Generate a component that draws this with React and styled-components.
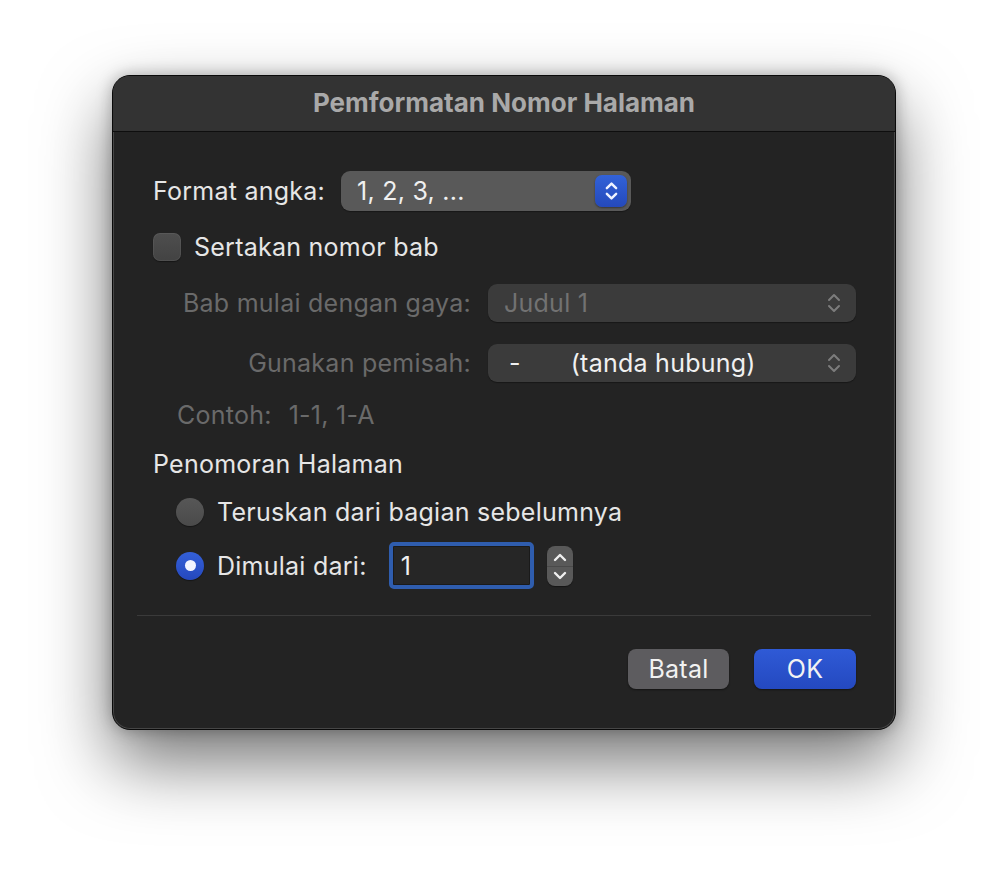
import React from "react";
import styled, { createGlobalStyle } from "styled-components";

const Global = createGlobalStyle`
  html, body { margin: 0; padding: 0; background: #ffffff; }
  body { font-family: Inter, "Noto Sans", "Liberation Sans", sans-serif; }
  * { box-sizing: border-box; }
`;

const Page = styled.div`
  width: 1008px;
  height: 878px;
  display: flex;
  align-items: flex-start;
  justify-content: flex-start;
  padding: 75px 0 0 112px;
  background: #ffffff;
`;

const Dialog = styled.div`
  width: 784px;
  height: 655px;
  border-radius: 18px;
  overflow: hidden;
  background: #232323;
  border: 1px solid #0a0a0a;
  box-shadow: inset 0 0 0 1px rgba(255, 255, 255, 0.16),
    0 32px 70px rgba(0, 0, 0, 0.55), 0 0 16px rgba(0, 0, 0, 0.28);
  display: flex;
  flex-direction: column;
  color: #e4e4e4;
  font-size: 25px;
  letter-spacing: 0.25px;
`;

const TitleBar = styled.div`
  height: 56px;
  flex: none;
  display: flex;
  align-items: center;
  justify-content: center;
  background: #333333;
  border-bottom: 1px solid #0e0e0e;
  color: #a9a9a9;
  font-weight: 700;
  font-size: 26px;
  letter-spacing: 0;
  padding-bottom: 2px;
`;

const Body = styled.div`
  padding: 39px 39px 0 40px;
  display: flex;
  flex-direction: column;
`;

const Row = styled.div`
  display: flex;
  align-items: center;
  height: ${(p) => p.$h || 28}px;
  margin-top: ${(p) => p.$mt || 0}px;
  padding-left: ${(p) => p.$indent || 0}px;
  gap: ${(p) => p.$gap || 0}px;
`;

const Label = styled.span`
  color: ${(p) => (p.$disabled ? "#6a6a6a" : "#e6e6e6")};
  white-space: nowrap;
`;

const Popup = styled.div`
  height: ${(p) => p.$h || 40}px;
  width: ${(p) => p.$w}px;
  flex: none;
  border-radius: 9px;
  background: ${(p) => p.$bg || "#595959"};
  display: flex;
  align-items: center;
  padding-left: ${(p) => p.$pl || 16}px;
  padding-right: 4px;
  box-shadow: 0 1px 1px rgba(0, 0, 0, 0.35);
  color: ${(p) => (p.$disabled ? "#727272" : "#f0f0f0")};
`;

const PopupText = styled.span`
  flex: 1;
  white-space: nowrap;
`;

const BlueStepper = styled.div`
  width: 32px;
  height: 32px;
  border-radius: 7px;
  background: linear-gradient(#3262d8, #2449bb);
  display: flex;
  align-items: center;
  justify-content: center;
  box-shadow: 0 1px 2px rgba(0, 0, 0, 0.4);
`;

const GrayChevron = styled.div`
  width: 32px;
  height: 32px;
  display: flex;
  align-items: center;
  justify-content: center;
  margin-right: 2px;
`;

const Checkbox = styled.div`
  width: 28px;
  height: 28px;
  border-radius: 7px;
  background: linear-gradient(#4e4e4e, #434343);
  box-shadow: inset 0 0 0 1px rgba(255, 255, 255, 0.06), 0 1px 1px rgba(0, 0, 0, 0.4);
  margin-right: 13px;
  flex: none;
`;

const Grid = styled.div`
  display: grid;
  grid-template-columns: 318px 368px;
  column-gap: 17px;
  row-gap: 22px;
  margin-top: 23px;
  align-items: center;
`;

const RightLabel = styled(Label)`
  text-align: right;
`;

const Radio = styled.div`
  width: 28px;
  height: 28px;
  border-radius: 50%;
  flex: none;
  margin-right: 13px;
  display: flex;
  align-items: center;
  justify-content: center;
  background: ${(p) => (p.$on ? "linear-gradient(#3460d8, #2548bd)" : "linear-gradient(#575757, #4a4a4a)")};
  box-shadow: 0 1px 1px rgba(0, 0, 0, 0.4);
  &::after {
    content: "";
    display: ${(p) => (p.$on ? "block" : "none")};
    width: 11px;
    height: 11px;
    border-radius: 50%;
    background: #f2f4ff;
  }
`;

const NumberField = styled.div`
  width: 145px;
  height: 47px;
  flex: none;
  border-radius: 5px;
  border: 4px solid #2f5dae;
  background: #262626;
  display: flex;
  align-items: center;
  padding-left: 8px;
  color: #f0f0f0;
  margin-left: 22px;
  box-shadow: inset 0 0 0 1px #1a1a1a;
`;

const SmallStepper = styled.div`
  width: 26px;
  height: 40px;
  flex: none;
  border-radius: 8px;
  background: #595959;
  margin-left: 13px;
  display: flex;
  flex-direction: column;
  align-items: center;
  justify-content: space-between;
  padding: 6px 0 5px;
  box-shadow: 0 1px 1px rgba(0, 0, 0, 0.4);
  position: relative;
  &::before {
    content: "";
    position: absolute;
    left: 0;
    right: 0;
    top: 20px;
    height: 1px;
    background: #4a4a4a;
  }
`;

const Separator = styled.div`
  height: 1px;
  background: #3a3a3a;
  margin: 26px -15px 0 -16px;
`;

const Buttons = styled.div`
  display: flex;
  justify-content: flex-end;
  gap: 25px;
  margin-top: 33px;
`;

const Button = styled.div`
  width: ${(p) => p.$w}px;
  height: 40px;
  border-radius: 8px;
  display: flex;
  align-items: center;
  justify-content: center;
  color: #f2f2f2;
  font-size: 25px;
  background: ${(p) => (p.$primary ? "linear-gradient(#2f5ad6, #2449c0)" : "#5d5c5f")};
  box-shadow: 0 1px 2px rgba(0, 0, 0, 0.45);
`;

const Spacer = styled.span`
  display: inline-block;
  width: ${(p) => p.$w}px;
`;

const UpDown = ({ color = "#fff", w = 14, h = 22, sw = 2.6 }) => (
  <svg width={w} height={h} viewBox="0 0 14 22" fill="none">
    <path d="M2 8 L7 3 L12 8" stroke={color} strokeWidth={sw} strokeLinecap="round" strokeLinejoin="round" />
    <path d="M2 14 L7 19 L12 14" stroke={color} strokeWidth={sw} strokeLinecap="round" strokeLinejoin="round" />
  </svg>
);

const Chev = ({ up }) => (
  <svg width="14" height="10" viewBox="0 0 14 10" fill="none">
    <path
      d={up ? "M2 8 L7 3 L12 8" : "M2 2 L7 7 L12 2"}
      stroke="#f0f0f0"
      strokeWidth="2.4"
      strokeLinecap="round"
      strokeLinejoin="round"
    />
  </svg>
);

export default function App() {
  return (
    <>
      <Global />
      <Page>
        <Dialog>
          <TitleBar>Pemformatan Nomor Halaman</TitleBar>
          <Body>
            <Row $h={40} $gap={16}>
              <Label>Format angka:</Label>
              <Popup $w={290} $h={40}>
                <PopupText>1, 2, 3, ...</PopupText>
                <BlueStepper>
                  <UpDown color="#eef2ff" w={13} h={22} sw={2.6} />
                </BlueStepper>
              </Popup>
            </Row>
            <Row $h={28} $mt={22}>
              <Checkbox />
              <Label>Sertakan nomor bab</Label>
            </Row>
            <Grid>
              <RightLabel $disabled>Bab mulai dengan gaya:</RightLabel>
              <Popup $w={368} $h={38} $bg="#3b3b3b" $disabled>
                <PopupText>Judul 1</PopupText>
                <GrayChevron>
                  <UpDown color="#7c7c7c" w={14} h={24} sw={2} />
                </GrayChevron>
              </Popup>
              <RightLabel $disabled>Gunakan pemisah:</RightLabel>
              <Popup $w={368} $h={38} $bg="#3b3b3b" $pl={21}>
                <PopupText>
                  -<Spacer $w={50} />(tanda hubung)
                </PopupText>
                <GrayChevron>
                  <UpDown color="#7c7c7c" w={14} h={24} sw={2} />
                </GrayChevron>
              </Popup>
            </Grid>
            <Row $h={26} $mt={20} $indent={24}>
              <Label $disabled>Contoh:</Label>
              <Spacer $w={17} />
              <Label $disabled>1-1, 1-A</Label>
            </Row>
            <Row $h={26} $mt={23}>
              <Label>Penomoran Halaman</Label>
            </Row>
            <Row $h={28} $mt={21} $indent={23}>
              <Radio />
              <Label>Teruskan dari bagian sebelumnya</Label>
            </Row>
            <Row $h={47} $mt={16} $indent={23}>
              <Radio $on />
              <Label>Dimulai dari:</Label>
              <NumberField>1</NumberField>
              <SmallStepper>
                <Chev up />
                <Chev />
              </SmallStepper>
            </Row>
            <Separator />
            <Buttons>
              <Button $w={101}>Batal</Button>
              <Button $w={102} $primary>
                OK
              </Button>
            </Buttons>
          </Body>
        </Dialog>
      </Page>
    </>
  );
}
